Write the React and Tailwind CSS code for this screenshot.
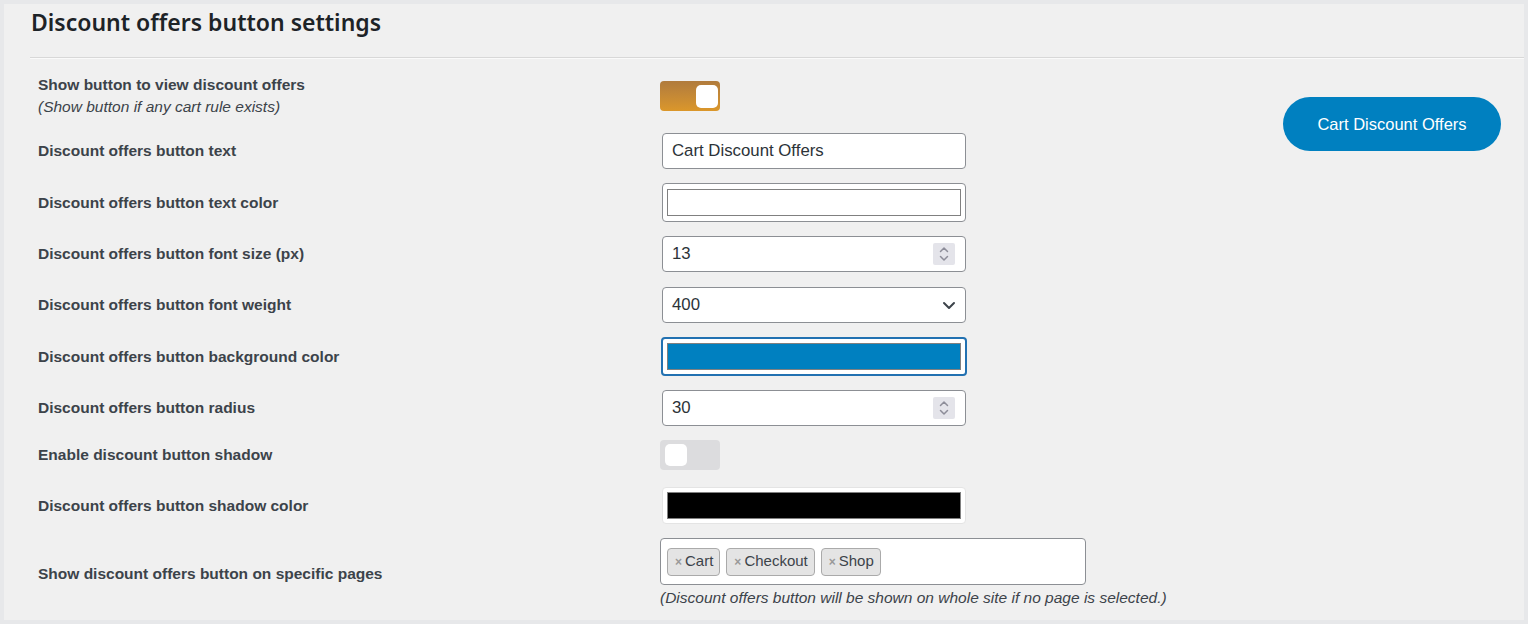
import React from "react";

const label = "text-[15.5px] font-bold text-[#3c434a] whitespace-nowrap";

function Spinner() {
  return (
    <div className="w-[22px] h-[22px] bg-[#e4e4ea] rounded-[2px] flex flex-col items-center justify-center">
      <svg width="12" height="18" viewBox="0 0 12 18" fill="none" stroke="#8d8d99" strokeWidth="1.5" strokeLinecap="round" strokeLinejoin="round">
        <path d="M2.5 6.5 L6 3 L9.5 6.5" />
        <path d="M2.5 11.5 L6 15 L9.5 11.5" />
      </svg>
    </div>
  );
}

function Chip({ text }) {
  return (
    <div className="h-[28px] flex items-center gap-[3px] pl-[7px] pr-[6px] bg-[#e4e4e4] border border-[#aaaaaa] rounded-[4px] text-[15px] text-[#3c434a]">
      <span className="text-[12px] text-[#999] font-bold leading-none">×</span>
      <span>{text}</span>
    </div>
  );
}

function Row({ mt, children, labelNode }) {
  return (
    <div className={`flex items-center ${mt}`}>
      <div className="w-[624px] shrink-0">{labelNode}</div>
      <div>{children}</div>
    </div>
  );
}

export default function App() {
  return (
    <div className="w-[1528px] h-[624px] bg-[#e7e8ea] p-[4px] overflow-hidden" style={{ fontFamily: '"Liberation Sans", Arial, sans-serif' }}>
      <div className="w-full h-full bg-[#f0f0f0] flex flex-col">
        <div className="shrink-0 ml-[26px] h-[54px] border-b border-[#d8d8d8] shadow-[0_1px_0_#fafafa] flex items-start">
          <h1 className="mt-[1px] ml-[1px] text-[23px] font-semibold text-[#1d2327]" style={{ fontFamily: '"Noto Sans", "Open Sans", sans-serif' }}>
            Discount offers button settings
          </h1>
        </div>
        <div className="flex">
          <div className="pl-[34px] pt-[16px] flex flex-col">
            <Row
              mt="mt-0"
              labelNode={
                <div className="leading-[22px]">
                  <div className={label}>Show button to view discount offers</div>
                  <div className="text-[15.5px] italic text-[#3c434a]">(Show button if any cart rule exists)</div>
                </div>
              }
            >
              <div className="-ml-[2px] w-[60px] h-[30px] rounded-[4px] bg-gradient-to-b from-[#b07b3c] to-[#db972a] flex items-center justify-end pr-[2px]">
                <div className="w-[22px] h-[23px] bg-white rounded-[5px]" />
              </div>
            </Row>

            <Row mt="mt-[15px]" labelNode={<div className={label}>Discount offers button text</div>}>
              <div className="w-[304px] h-[36px] bg-white border border-[#8c8f94] rounded-[4px] flex items-center px-[9px] text-[16.8px] text-[#2c3338]">
                Cart Discount Offers
              </div>
            </Row>

            <Row mt="mt-[14px]" labelNode={<div className={label}>Discount offers button text color</div>}>
              <div className="w-[304px] h-[39px] bg-white border border-[#8c8f94] rounded-[4px] px-[4px] py-[5px]">
                <div className="w-full h-full bg-white border border-[#808080]" />
              </div>
            </Row>

            <Row mt="mt-[14px]" labelNode={<div className={label}>Discount offers button font size (px)</div>}>
              <div className="w-[304px] h-[36px] bg-white border border-[#8c8f94] rounded-[4px] flex items-center justify-between pl-[9px] pr-[10px] text-[16.8px] text-[#2c3338]">
                <span>13</span>
                <Spinner />
              </div>
            </Row>

            <Row mt="mt-[15px]" labelNode={<div className={label}>Discount offers button font weight</div>}>
              <div className="w-[304px] h-[36px] bg-white border border-[#8c8f94] rounded-[4px] flex items-center justify-between pl-[9px] pr-[8px] text-[16.8px] text-[#2c3338]">
                <span>400</span>
                <svg width="16" height="16" viewBox="0 0 16 16" fill="none" stroke="#3c434a" strokeWidth="2" strokeLinecap="round" strokeLinejoin="round">
                  <path d="M3 6 L8 11 L13 6" />
                </svg>
              </div>
            </Row>

            <Row mt="mt-[14px]" labelNode={<div className={label}>Discount offers button background color</div>}>
              <div className="-ml-[1px] w-[306px] h-[39px] bg-white border-2 border-[#2271b1] rounded-[4px] px-[4px] py-[4px]">
                <div className="w-full h-full bg-[#0080c0] border border-[#808080]" />
              </div>
            </Row>

            <Row mt="mt-[14px]" labelNode={<div className={label}>Discount offers button radius</div>}>
              <div className="w-[304px] h-[36px] bg-white border border-[#8c8f94] rounded-[4px] flex items-center justify-between pl-[9px] pr-[10px] text-[16.8px] text-[#2c3338]">
                <span>30</span>
                <Spinner />
              </div>
            </Row>

            <Row mt="mt-[14px]" labelNode={<div className={label}>Enable discount button shadow</div>}>
              <div className="-ml-[2px] w-[60px] h-[30px] rounded-[4px] bg-[#dcdcde] flex items-center pl-[5px]">
                <div className="w-[22px] h-[22px] bg-white rounded-[5px]" />
              </div>
            </Row>

            <Row mt="mt-[17px]" labelNode={<div className={label}>Discount offers button shadow color</div>}>
              <div className="w-[304px] h-[37px] bg-white border border-[#e4e4e4] rounded-[4px] px-[4px] py-[4px]">
                <div className="w-full h-full bg-black border border-[#808080]" />
              </div>
            </Row>

            <Row mt="mt-[14px]" labelNode={<div className={label}>Show discount offers button on specific pages</div>}>
              <div className="-ml-[2px]">
                <div className="w-[426px] h-[47px] bg-white border border-[#8c8f94] rounded-[4px] flex items-center gap-[6px] px-[6px]">
                  <Chip text="Cart" />
                  <Chip text="Checkout" />
                  <Chip text="Shop" />
                </div>
                <div className="mt-[1px] text-[15.5px] italic text-[#3c434a] whitespace-nowrap">
                  (Discount offers button will be shown on whole site if no page is selected.)
                </div>
              </div>
            </Row>
          </div>
          <div className="ml-auto pr-[23px] pt-[39px]">
            <div className="w-[218px] h-[54px] rounded-full bg-[#0080c0] text-white text-[16.5px] flex items-center justify-center whitespace-nowrap">
              Cart Discount Offers
            </div>
          </div>
        </div>
      </div>
    </div>
  );
}
